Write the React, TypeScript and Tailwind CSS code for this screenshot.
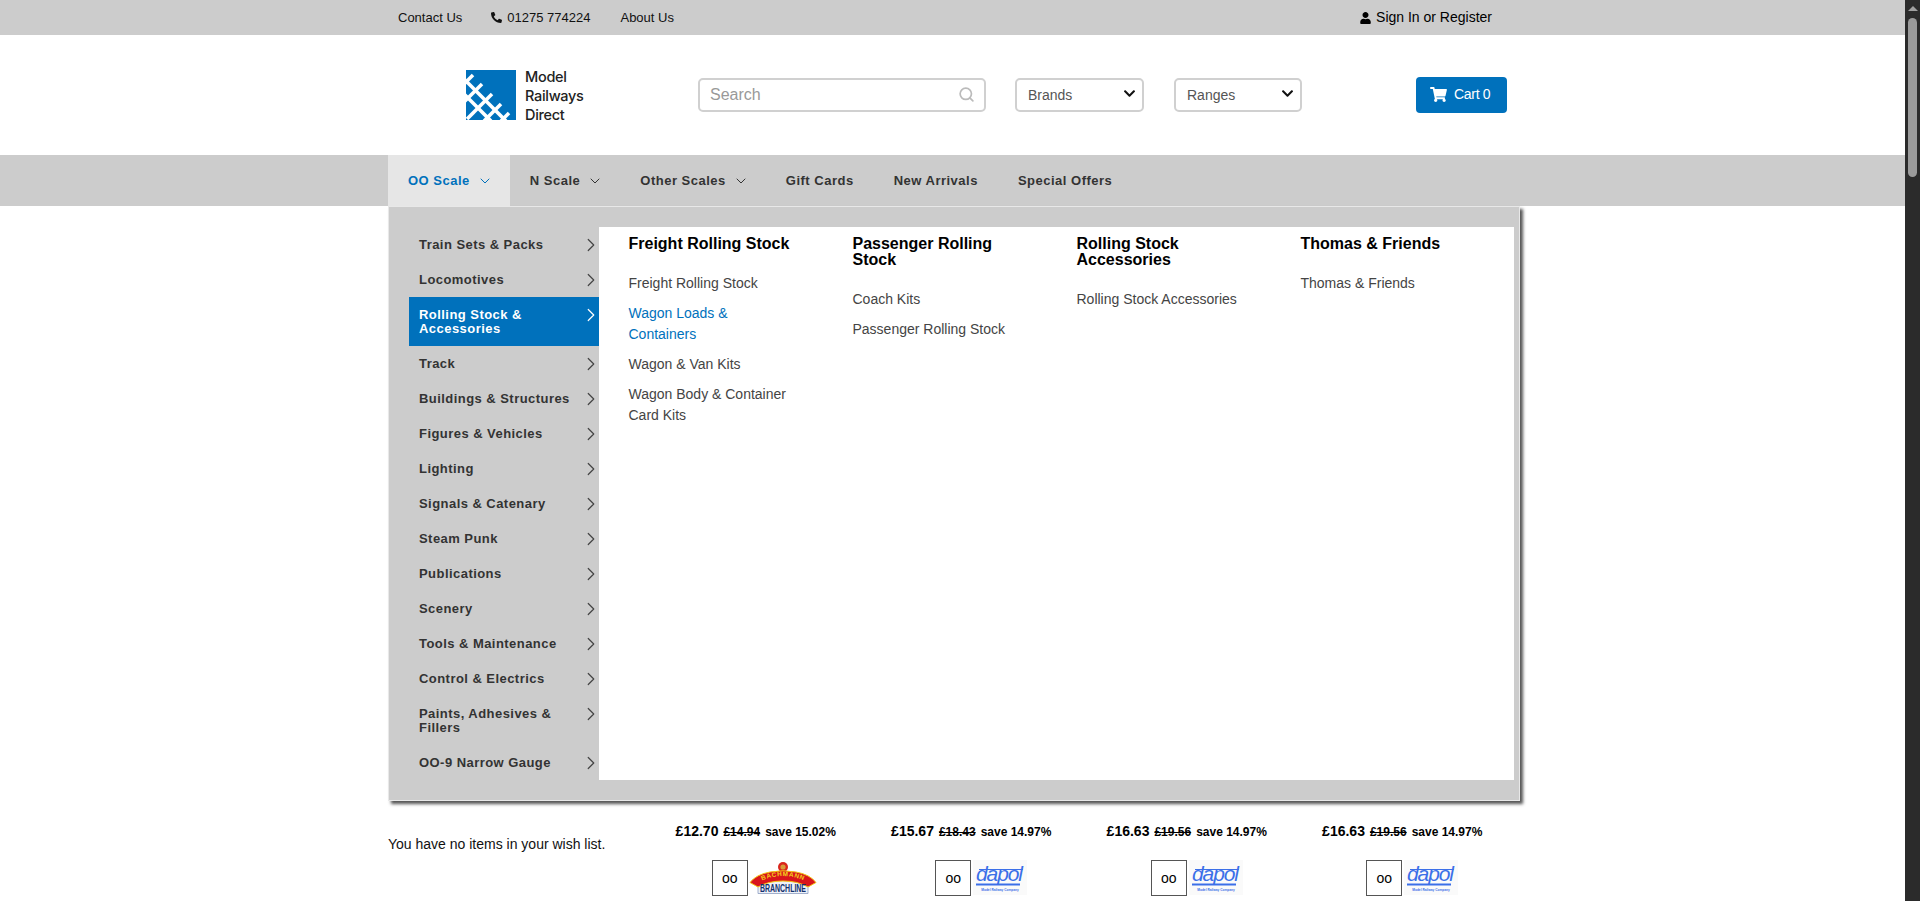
import React from "react";
import { FaUser, FaPhone, FaShoppingCart, FaChevronDown } from "react-icons/fa";
import { ChevronDown, ChevronRight, Search } from "lucide-react";

const sidebar: { label: string; h: number; active?: boolean }[] = [
  { label: "Train Sets & Packs", h: 35 },
  { label: "Locomotives", h: 35 },
  { label: "Rolling Stock & Accessories", h: 49, active: true },
  { label: "Track", h: 35 },
  { label: "Buildings & Structures", h: 35 },
  { label: "Figures & Vehicles", h: 35 },
  { label: "Lighting", h: 35 },
  { label: "Signals & Catenary", h: 35 },
  { label: "Steam Punk", h: 35 },
  { label: "Publications", h: 35 },
  { label: "Scenery", h: 35 },
  { label: "Tools & Maintenance", h: 35 },
  { label: "Control & Electrics", h: 35 },
  { label: "Paints, Adhesives & Fillers", h: 49 },
  { label: "OO-9 Narrow Gauge", h: 35 },
];

const columns: { title: string; links: string[] }[] = [
  { title: "Freight Rolling Stock", links: ["Freight Rolling Stock", "Wagon Loads & Containers", "Wagon & Van Kits", "Wagon Body & Container Card Kits"] },
  { title: "Passenger Rolling Stock", links: ["Coach Kits", "Passenger Rolling Stock"] },
  { title: "Rolling Stock Accessories", links: ["Rolling Stock Accessories"] },
  { title: "Thomas & Friends", links: ["Thomas & Friends"] },
];

const products = [
  { price: "£12.70", was: "£14.94", save: "save 15.02%", brand: "bachmann" },
  { price: "£15.67", was: "£18.43", save: "save 14.97%", brand: "dapol" },
  { price: "£16.63", was: "£19.56", save: "save 14.97%", brand: "dapol" },
  { price: "£16.63", was: "£19.56", save: "save 14.97%", brand: "dapol" },
];

const navItems = [
  { label: "OO Scale", chevron: true, active: true },
  { label: "N Scale", chevron: true },
  { label: "Other Scales", chevron: true },
  { label: "Gift Cards" },
  { label: "New Arrivals" },
  { label: "Special Offers" },
];

function Logo() {
  return (
    <svg width="50" height="50" viewBox="0 0 50 50" className="shrink-0">
      <rect width="50" height="50" fill="#0071bc" />
      <g stroke="#fff" strokeWidth="3.6" fill="none">
        <path d="M-2 9 L40 51" />
        <path d="M-2 24 L25 51" />
        <path d="M7 5 L-2 14" />
        <path d="M16 14 L-2 32" />
        <path d="M26 24 L1 49" />
        <path d="M35 34 L18 51" />
        <path d="M43 43 L35 51" />
      </g>
    </svg>
  );
}

function Dapol() {
  return (
    <svg width="54" height="35" viewBox="0 0 54 35">
      <rect width="54" height="35" fill="#fafafa" />
      <text x="3" y="21" fontSize="21" fontStyle="italic" fill="#3b6fe8" fontFamily="Liberation Sans" textLength="47">dapol</text>
      <path d="M6 9.5 H50" stroke="#3b6fe8" strokeWidth="1.2" />
      <path d="M3 24.5 H47" stroke="#3b6fe8" strokeWidth="2" />
      <text x="27" y="30.5" textAnchor="middle" fontSize="3.2" fontWeight="700" fill="#3b6fe8" fontFamily="Liberation Sans">Model Railway Company</text>
    </svg>
  );
}

function Bachmann() {
  return (
    <svg width="68" height="36" viewBox="0 0 68 36" className="overflow-visible">
      <rect width="68" height="36" fill="#fff" />
      <g transform="translate(0 1.5)">
        <circle cx="33" cy="5.5" r="5" fill="#d9261c" />
        <circle cx="33" cy="5.5" r="2.6" fill="#d99a3a" />
        <path d="M8 20 Q33 16 58 20 L58 32 L8 32 Z" fill="#eef1f8" stroke="#8b9cc0" strokeWidth="0.8" />
        <path d="M0 21 Q6 13 20 10.5 Q33 8 46 10.5 Q60 13 66 21 L58 25.5 Q48 19.5 33 19.5 Q18 19.5 8 25.5 Z" fill="#d9151c" stroke="#f3c613" strokeWidth="1" />
        <path id="bach-arc" d="M7 21.5 Q33 7.5 59 21.5" fill="none" />
        <text fontSize="6.4" fontWeight="700" fill="#f3d21a" fontFamily="Liberation Sans" letterSpacing="0.7">
          <textPath href="#bach-arc" startOffset="50%" textAnchor="middle">BACHMANN</textPath>
        </text>
        <text x="33" y="30" textAnchor="middle" fontSize="10.5" fontWeight="700" fill="#12306e" fontFamily="Liberation Sans" textLength="46" lengthAdjust="spacingAndGlyphs">BRANCHLINE</text>
      </g>
    </svg>
  );
}

export default function App() {
  return (
    <div className="flex h-[901px] w-[1920px] overflow-hidden bg-white font-['Liberation_Sans',Arial,sans-serif]">
      <div className="w-[1905px] shrink-0 h-full overflow-hidden">
        {/* Top bar */}
        <div className="h-[35px] bg-[#cccccc]">
          <div className="w-[1140px] ml-[388px] h-full flex items-center justify-between pl-[10px] pr-[36px]">
            <div className="flex items-center text-[13px] text-[#111]">
              <span>Contact Us</span>
              <span className="ml-[29px] flex items-center gap-[5px]"><FaPhone className="w-[11px] h-[11px] scale-x-[-1]" />01275 774224</span>
              <span className="ml-[30px]">About Us</span>
            </div>
            <div className="flex items-center gap-[5px] text-[14px] text-black"><FaUser className="w-[11px] h-[12px]" />Sign In or Register</div>
          </div>
        </div>
        {/* Header */}
        <div className="h-[120px] ml-[388px] w-[1140px] flex items-center">
          <div className="ml-[78px] w-[232px] flex items-center gap-[9px] -mt-[1px]">
            <Logo />
            <div className="mt-[2px] text-[14.5px] leading-[19px] font-medium text-[#222] font-['Inter',sans-serif] tracking-[-0.3px]">Model<br />Railways<br />Direct</div>
          </div>
          <div className="-mt-[1px] w-[288px] h-[34px] border-2 border-[#d0d0d0] rounded-[5px] flex items-center justify-between pl-[10px] pr-[9px] text-[16px] text-[#999]">
            <span>Search</span>
            <Search className="w-[17px] h-[17px] -mt-[1px] text-[#bbb]" strokeWidth={2.4} />
          </div>
          <div className="ml-[29px] -mt-[1px] w-[129px] h-[34px] border-2 border-[#d0d0d0] rounded-[5px] flex items-center justify-between pl-[11px] pr-[6px] text-[14px] text-[#555]">
            <span className="mt-[1px]">Brands</span>
            <FaChevronDown className="w-[13px] h-[13px] text-[#111] -mt-[2px]" />
          </div>
          <div className="ml-[30px] -mt-[1px] w-[128px] h-[34px] border-2 border-[#d0d0d0] rounded-[5px] flex items-center justify-between pl-[11px] pr-[6px] text-[14px] text-[#555]">
            <span className="mt-[1px]">Ranges</span>
            <FaChevronDown className="w-[13px] h-[13px] text-[#111] -mt-[2px]" />
          </div>
          <div className="ml-[114px] -mt-[1px] w-[91px] h-[36px] bg-[#0071bc] rounded-[4px] flex items-center pl-[14px] gap-[7px] text-[14px] text-white tracking-[-0.3px]">
            <FaShoppingCart className="w-[17px] h-[15px]" />
            Cart 0
          </div>
        </div>
        {/* Nav */}
        <div className="h-[51px] bg-[#cccccc]">
          <div className="ml-[388px] h-full flex items-start text-[13px] font-bold tracking-[0.5px]">
            {navItems.map((n) => (
              <div key={n.label} className={`h-[51px] flex items-center ${n.chevron ? "pl-[20px] pr-[17px] gap-[7px]" : "px-[20px]"} ${n.active ? "bg-[#e6e6e6] text-[#0071bc]" : "text-[#333]"}`}>
                {n.label}
                {n.chevron && <ChevronDown className="w-[16px] h-[16px]" strokeWidth={1.5} />}
              </div>
            ))}
          </div>
        </div>
        {/* Mega menu */}
        <div className="ml-[388px] w-[1132px] h-[595px] border border-[#e8e8e8] bg-[#cccccc] shadow-[3px_3px_3px_#555] pt-[20px] pr-[5px] pb-[20px] pl-[20px] flex">
          <div className="w-[190px] shrink-0">
            {sidebar.map((s) => (
              <div key={s.label} style={{ height: s.h }} className={`flex items-center justify-between pl-[10px] text-[13px] leading-[14px] font-bold tracking-[0.45px] ${s.active ? "bg-[#0071bc] text-white" : "text-[#333]"}`}>
                <span className="w-[156px]">{s.label}</span>
                <ChevronRight className={`self-start mt-[7px] -mr-[3px] w-[22px] h-[22px] shrink-0 ${s.active ? "text-white" : "text-[#444]"}`} strokeWidth={1.3} />
              </div>
            ))}
          </div>
          <div className="flex-1 bg-white grid grid-cols-[224px_224px_224px_1fr] pl-[29.5px] pt-[9px] content-start h-full">
            {columns.map((c) => (
              <div key={c.title} className="w-[175px]">
                <div className="text-[16px] leading-[16px] font-bold text-black">{c.title}</div>
                <div className="mt-[21px] w-[165px] text-[14px] leading-[21px] text-[#444]">
                  {c.links.map((l) => (
                    <div key={l} className={`mb-[9px] ${l.startsWith("Wagon Loads") ? "text-[#0071bc]" : ""}`}>{l}</div>
                  ))}
                </div>
              </div>
            ))}
          </div>
        </div>
        {/* Bottom */}
        <div className="ml-[388px] flex mt-[20px]">
          <div className="w-[260px] shrink-0 pt-[13px] text-[14px] text-[#111] leading-[20px]">You have no items in your wish list.</div>
          <div className="flex">
            {products.map((p, i) => (
              <div key={i} className="w-[215.5px] flex flex-col items-center">
                <div className="flex items-baseline gap-[5px] text-black font-bold h-[20px]">
                  <span className="text-[14px]">{p.price}</span>
                  <span className="text-[12px] line-through">{p.was}</span>
                  <span className="text-[12px]">{p.save}</span>
                </div>
                <div className={`mt-[19px] flex items-start gap-[2px] ${p.brand === "dapol" ? "ml-[20px]" : "ml-[18px]"}`}>
                  <div className="w-[36px] h-[36px] border border-[#555] flex items-center justify-center text-[14px] text-black">oo</div>
                  {p.brand === "dapol" ? <Dapol /> : <Bachmann />}
                </div>
              </div>
            ))}
          </div>
        </div>
      </div>
      {/* Scrollbar */}
      <div className="w-[15px] shrink-0 h-full bg-[#2b2b2b] flex flex-col items-center">
        <div className="mt-[6px] w-0 h-0 border-l-[5px] border-r-[5px] border-b-[5px] border-l-transparent border-r-transparent border-b-[#a0a0a0]" />
        <div className="mt-[7px] w-[9px] h-[159px] bg-[#9b9b9b] rounded-[5px]" />
      </div>
    </div>
  );
}
